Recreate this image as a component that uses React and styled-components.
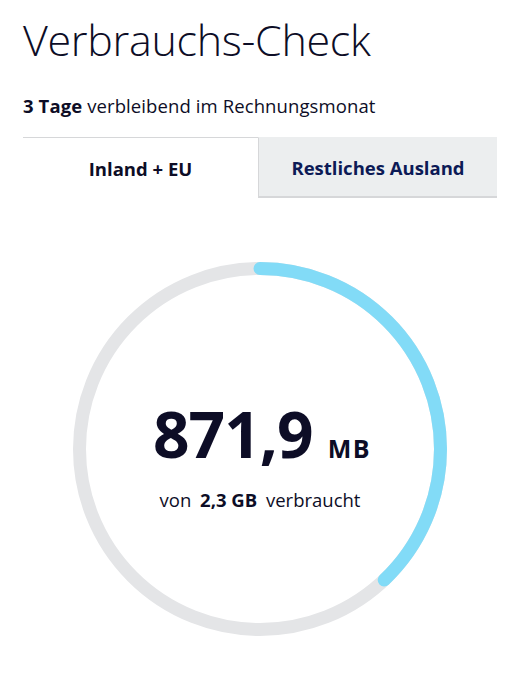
import React from 'react'
import styled, { createGlobalStyle } from 'styled-components';

const GlobalStyle = createGlobalStyle`
  body {
    margin: 0;
    background: #fff;
    font-family: "Open Sans", "Noto Sans", sans-serif;
    color: #0d0d26;
  }
`;

const Page = styled.div`
  width: 527px;
  padding: 0 30px 0 23px;
  box-sizing: border-box;
`;

const Title = styled.h1`
  margin: 0;
  padding-top: 14px;
  font-size: 43px;
  font-weight: 300;
  line-height: 52px;
  letter-spacing: -0.3px;
`;

const Remaining = styled.p`
  margin: 29px 0 0;
  font-size: 18.5px;
  line-height: 22px;
  letter-spacing: 0.1px;
  b { font-weight: 700; }
`;

const Tabs = styled.div`
  display: grid;
  grid-template-columns: 235px 239px;
  margin-top: 20px;
  height: 61px;
`;

const Tab = styled.div`
  display: flex;
  align-items: center;
  justify-content: center;
  font-size: 18.5px;
  font-weight: 700;
  box-sizing: border-box;
  color: ${p => (p.$active ? '#0d0d26' : '#0c1a56')};
  background: ${p => (p.$active ? '#fff' : '#eceeef')};
  border-top: 1px solid ${p => (p.$active ? '#d6d7d9' : '#eceeef')};
  border-left: ${p => (p.$active ? 'none' : '1px solid #d6d7d9')};
  border-bottom: ${p => (p.$active ? 'none' : '2px solid #d6d7d9')};
`;

const GaugeWrap = styled.div`
  position: relative;
  width: 374px;
  height: 374px;
  margin: 64px 0 0 50px;
  display: flex;
  flex-direction: column;
  align-items: center;
  justify-content: center;
`;

const Ring = styled.svg`
  position: absolute;
  inset: 0;
`;

const Amount = styled.div`
  display: flex;
  align-items: baseline;
  gap: 15px;
  margin-top: 9px;
  margin-left: 4px;
`;

const Big = styled.span`
  font-size: 64px;
  font-weight: 700;
  letter-spacing: -1px;
  line-height: 76px;
`;

const Unit = styled.span`
  font-size: 25px;
  font-weight: 700;
  letter-spacing: 1.5px;
`;

const Of = styled.div`
  font-size: 18.5px;
  margin-top: 15px;
  word-spacing: 4px;
  b { font-weight: 700; word-spacing: 0; }
`;

const R = 180.5;
const C = 2 * Math.PI * R;

const Gauge = ({ used, total }) => {
  const frac = used / total;
  return (
    <GaugeWrap>
      <Ring width="374" height="374" viewBox="0 0 374 374">
        <circle cx="187" cy="187" r={R} fill="none" stroke="#e4e5e7" strokeWidth="13" />
        <circle
          cx="187" cy="187" r={R} fill="none" stroke="#82dbf7" strokeWidth="13"
          strokeLinecap="round"
          strokeDasharray={`${C * frac} ${C}`}
          transform="rotate(-90 187 187)"
        />
      </Ring>
      <Amount>
        <Big>871,9</Big>
        <Unit>MB</Unit>
      </Amount>
      <Of>von <b>2,3 GB</b> verbraucht</Of>
    </GaugeWrap>
  );
};

const App = () => {
  return (
    <Page>
      <GlobalStyle />
      <Title>Verbrauchs-Check</Title>
      <Remaining><b>3 Tage</b> verbleibend im Rechnungsmonat</Remaining>
      <Tabs>
        <Tab $active>Inland + EU</Tab>
        <Tab>Restliches Ausland</Tab>
      </Tabs>
      <Gauge used={871.9} total={2300} />
    </Page>
  )
}

export default App
